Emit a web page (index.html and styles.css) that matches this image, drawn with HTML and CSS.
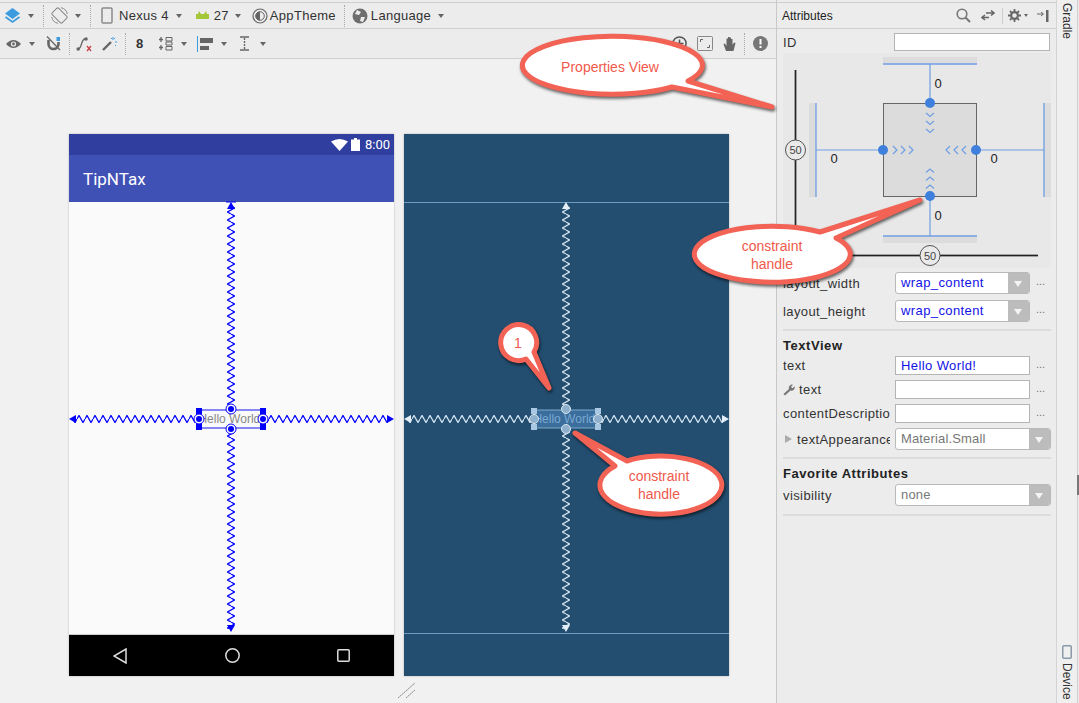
FILE: index.html

```html
<!DOCTYPE html>
<html lang="en">
<head>
    <meta charset="UTF-8">
    <title>Layout Editor</title>
    <link rel="stylesheet" href="styles.css">
</head>
<body>
<div class="app">

    <div class="editor">
        <!-- toolbar atas -->
        <div class="toolbar toolbar-top">
            <svg class="ico i-layers" width="17" height="17" viewBox="0 0 17 17"><path d="M8.500 1 16 6.500 8.500 12 1 6.500Z" fill="#3d9be0"/><path d="M1.500 10 8.500 15 15.500 10" fill="none" stroke="#3d9be0" stroke-width="1.800"/></svg>
            <span class="caret c-layers"></span>
            <span class="sep s-layers"></span>
            <svg class="ico i-rotate" width="17" height="17" viewBox="0 0 17 17"><g fill="none" stroke="#888"><rect x="4" y="1.500" width="9" height="14" rx="1.500" transform="rotate(-45 8.500 8.500)"/><path d="M10 0.700A8 8 0 0 1 16.300 7M7 16.300A8 8 0 0 1 0.700 10"/></g></svg>
            <span class="caret c-rotate"></span>
            <span class="sep s-rotate"></span>
            <svg class="ico i-phone" width="12" height="17" viewBox="0 0 12 17"><rect x="1" y="1" width="10" height="15" rx="1" fill="none" stroke="#8a8a8a" stroke-width="1.500"/></svg>
            <span class="tb-text t-nexus">Nexus 4</span>
            <span class="caret c-nexus"></span>
            <svg class="ico i-android" width="13" height="9" viewBox="0 0 13 9"><path d="M0 3H13V8H0ZM2 3 3 0 5 3ZM8 3 10 0 11 3Z" fill="#a4c639"/></svg>
            <span class="tb-text t-api">27</span>
            <span class="caret c-api"></span>
            <svg class="ico i-theme" width="16" height="16" viewBox="0 0 16 16"><circle cx="8" cy="8" r="7" fill="none" stroke="#666" stroke-width="1.200"/><circle cx="8" cy="8" r="4.300" fill="none" stroke="#666"/><path d="M8 3.700A4.300 4.300 0 0 0 8 12.300Z" fill="#666"/></svg>
            <span class="tb-text t-theme">AppTheme</span>
            <span class="sep s-theme"></span>
            <svg class="ico i-globe" width="16" height="16" viewBox="0 0 16 16"><circle cx="8" cy="8" r="7.500" fill="#6e6e6e"/><path d="M5 2 9 4 7 7 3 6ZM9 9 13 9 11 14 8 13Z" fill="#ececec"/></svg>
            <span class="tb-text t-lang">Language</span>
            <span class="caret c-lang"></span>
        </div>

        <!-- toolbar kedua -->
        <div class="toolbar toolbar-second">
            <svg class="ico i-eye" width="15" height="10" viewBox="0 0 15 10"><path d="M0 5Q7.500 -3 15 5 7.500 13 0 5Z" fill="#666"/><circle cx="7.500" cy="5" r="2.600" fill="#ececec"/><circle cx="7.500" cy="5" r="1.400" fill="#666"/></svg>
            <span class="caret c-eye"></span>
            <svg class="ico i-magnet" width="15" height="15" viewBox="0 0 15 15"><path d="M2.500 4V8A5 5 0 0 0 12.500 8V6" fill="none" stroke="#666" stroke-width="2.600"/><rect x="10.500" y="1" width="3.500" height="4" fill="#3d9be0"/><path d="M1 0.500 14 14" stroke="#666" stroke-width="1.300"/></svg>
            <span class="sep s-magnet"></span>
            <svg class="ico i-path" width="16" height="16" viewBox="0 0 16 16"><path d="M2 13C6 13 5 3 9 3" fill="none" stroke="#666" stroke-width="1.300"/><circle cx="2.200" cy="13" r="1.800" fill="#666"/><circle cx="10" cy="3" r="1.800" fill="#666"/><path d="M11 10 15 15M15 10 11 15" stroke="#c8434a" stroke-width="1.300"/></svg>
            <svg class="ico i-wand" width="15" height="15" viewBox="0 0 15 15"><path d="M1 14 9 6" stroke="#666" stroke-width="2.400"/><path d="M11 1V4M13 6H15M9 2 10 3M13 9 14 10M13 2 12 3" stroke="#3d9be0" stroke-width="1"/></svg>
            <span class="sep s-wand"></span>
            <span class="tb-text t-eight">8</span>
            <svg class="ico i-spacing" width="15" height="15" viewBox="0 0 15 15"><path d="M3 1V6M1 3.500H5M3 9V14M1 11.500H5" stroke="#666" stroke-width="1.300"/><path d="M8 1.500H14V5H8ZM8 6H14V9H8ZM8 10.500H14V14H8Z" fill="none" stroke="#666"/></svg>
            <span class="caret c-spacing"></span>
            <svg class="ico i-align" width="17" height="16" viewBox="0 0 17 16"><rect width="1" height="16" fill="#3d9be0"/><rect x="3" y="2" width="13" height="5" fill="#666"/><rect x="3" y="10" width="9" height="4" fill="#666"/></svg>
            <span class="caret c-align"></span>
            <svg class="ico i-text" width="9" height="15" viewBox="0 0 9 15"><path d="M0 1H9M0 14H9" fill="none" stroke="#666" stroke-width="1.400"/><path d="M4.500 2V13" stroke="#666" stroke-width="1.400" stroke-dasharray="2 1"/></svg>
            <span class="caret c-text"></span>
            <span class="spacer"></span>
            <svg class="ico i-plus" width="15" height="15" viewBox="0 0 15 15"><circle cx="7.500" cy="7.500" r="6.600" fill="none" stroke="#555" stroke-width="1.500"/><path d="M7.500 3.500V11.500M3.500 7.500H11.500" stroke="#555" stroke-width="1.600"/></svg>
            <svg class="ico i-fit" width="16" height="15" viewBox="0 0 16 15"><rect x="0.500" y="0.500" width="15" height="14" rx="1" fill="none" stroke="#888"/><path d="M3.500 6V3.500H6M12.500 9V11.500H10" fill="none" stroke="#666"/></svg>
            <svg class="ico i-hand" width="14" height="16" viewBox="0 0 14 16"><path d="M3 15 0.500 8 2 7.500 3.500 10V2.500H5V7.500 1H6.500V7.500 1.500H8V7.500 3H9.500V9L11 6.500 12.500 7 10.500 15Z" fill="#666"/></svg>
            <span class="sep s-hand"></span>
            <svg class="ico i-warn" width="15" height="15" viewBox="0 0 15 15"><circle cx="7.500" cy="7.500" r="7.500" fill="#777"/><path d="M6.500 3H8.500V8.500H6.500ZM6.500 10H8.500V12H6.500Z" fill="#fff"/></svg>
        </div>

        <!-- area kanvas -->
        <div class="canvas">
            <div class="phone">
                <div class="status-bar">
                    <svg width="17" height="12" viewBox="0 0 17 12"><path d="M0 2.500Q8.500 -2.500 17 2.500L8.500 12Z" fill="#fff"/></svg>
                    <svg class="battery" width="9" height="13" viewBox="0 0 9 13"><path d="M0 1.500H3V0H6V1.500H9V13H0Z" fill="#fff"/></svg>
                    <span class="clock">8:00</span>
                </div>
                <div class="app-bar">TipNTax</div>
                <div class="screen"></div>
                <div class="nav-bar">
                    <svg width="14" height="16" viewBox="0 0 14 16"><path d="M13 1V15L1 8Z" fill="none" stroke="#ddd" stroke-width="1.500"/></svg>
                    <svg width="15" height="15" viewBox="0 0 15 15"><circle cx="7.500" cy="7.500" r="6.700" fill="none" stroke="#ddd" stroke-width="1.500"/></svg>
                    <svg width="13" height="13" viewBox="0 0 13 13"><rect x="0.800" y="0.800" width="11.400" height="11.400" rx="1" fill="none" stroke="#ddd" stroke-width="1.500"/></svg>
                </div>
                <!-- garis constraint -->
                <svg class="blueprint-layer" width="325" height="542" viewBox="0 0 325 542">
                    <defs>
                        <pattern id="zig-v" x="158" y="0" width="8" height="8" patternUnits="userSpaceOnUse"><path d="M4 0 7.500 2 0.500 6 4 8" fill="none" stroke="#00f" stroke-width="1.300"/></pattern>
                        <pattern id="zig-h" x="0" y="281" width="8" height="8" patternUnits="userSpaceOnUse"><path d="M0 4 2 0.500 6 7.500 8 4" fill="none" stroke="#00f" stroke-width="1.300"/></pattern>
                    </defs>
                    <rect x="158" y="72" width="8" height="204" fill="url(#zig-v)"/>
                    <rect x="158" y="295" width="8" height="200" fill="url(#zig-v)"/>
                    <rect x="4" y="281" width="124" height="8" fill="url(#zig-h)"/>
                    <rect x="196" y="281" width="124" height="8" fill="url(#zig-h)"/>
                    <path d="M162 68 166 75H158ZM162 498 158 491H166ZM0 285 7 281V289ZM325 285 318 281V289Z" fill="#00f"/>
                    <path d="M157 68H167" stroke="#00f"/>
                    <rect x="130" y="276" width="64" height="18" fill="none" stroke="#3a3af0" stroke-width="1.200"/>
                    <text class="widget-text" x="162" y="289" text-anchor="middle" fill="#888">Hello World!</text>
                    <path d="M127 274H133V296H127ZM191 274H197V296H191Z" fill="#00f"/>
                    <g fill="#fff" stroke="#00f">
                        <circle cx="130" cy="285" r="5"/><circle cx="194" cy="285" r="5"/><circle cx="162" cy="275" r="5"/><circle cx="162" cy="295" r="5"/>
                    </g>
                    <g fill="#00f">
                        <circle cx="130" cy="285" r="3"/><circle cx="194" cy="285" r="3"/><circle cx="162" cy="275" r="3"/><circle cx="162" cy="295" r="3"/>
                    </g>
                </svg>
            </div>

            <div class="phone phone-blueprint">
                <svg class="blueprint-layer" width="325" height="542" viewBox="0 0 325 542">
                    <defs>
                        <pattern id="zig-v2" x="158" y="0" width="8" height="8" patternUnits="userSpaceOnUse"><path d="M4 0 7.500 2 0.500 6 4 8" fill="none" stroke="#d5e4f0" stroke-width="1.300"/></pattern>
                        <pattern id="zig-h2" x="0" y="281" width="8" height="8" patternUnits="userSpaceOnUse"><path d="M0 4 2 0.500 6 7.500 8 4" fill="none" stroke="#d5e4f0" stroke-width="1.300"/></pattern>
                    </defs>
                    <path d="M0 68.500H325M0 499.500H325" stroke="#6c9cbf"/>
                    <rect x="158" y="72" width="8" height="204" fill="url(#zig-v2)"/>
                    <rect x="158" y="295" width="8" height="200" fill="url(#zig-v2)"/>
                    <rect x="4" y="281" width="124" height="8" fill="url(#zig-h2)"/>
                    <rect x="196" y="281" width="124" height="8" fill="url(#zig-h2)"/>
                    <path d="M162 68 166 75H158ZM162 498 158 491H166ZM0 285 7 281V289ZM325 285 318 281V289Z" fill="#e4eef6"/>
                    <rect x="130" y="276" width="64" height="18" fill="#3b6e9c" stroke="#7fa9cc"/>
                    <text class="widget-text" x="162" y="289" text-anchor="middle" fill="#7aa8d2">Hello World!</text>
                    <path d="M127 274H133V280H127ZM127 290H133V296H127ZM191 274H197V280H191ZM191 290H197V296H191Z" fill="#a9c8e4"/>
                    <g fill="#8fb0cc" stroke="#dbe7f1">
                        <circle cx="130" cy="285" r="4.500"/><circle cx="194" cy="285" r="4.500"/><circle cx="162" cy="275" r="4.500"/><circle cx="162" cy="295" r="4.500"/>
                    </g>
                </svg>
            </div>

            <svg class="resize-mark" width="20" height="17" viewBox="0 0 20 17"><path d="M1 16 18 1M9 16 18 8" stroke="#888" stroke-dasharray="2 0.500"/></svg>
        </div>
    </div>

    <!-- panel atribut -->
    <div class="panel">
        <div class="panel-head">
            <span class="panel-title">Attributes</span>
            <span class="spacer"></span>
            <svg class="ico" width="15" height="15" viewBox="0 0 15 15"><circle cx="6" cy="6" r="4.800" fill="none" stroke="#777" stroke-width="1.600"/><path d="M9.500 9.500 14 14" stroke="#777" stroke-width="2"/></svg>
            <svg class="ico i-swap" width="14" height="11" viewBox="0 0 14 11"><path d="M1 7.500H8M4 5 1 7.500 4 10M5 3H13M10 0.500 13 3 10 5.500" fill="none" stroke="#666" stroke-width="1.500"/></svg>
            <span class="sep s-panel"></span>
            <svg class="ico i-gear" width="13" height="13" viewBox="0 0 13 13"><circle cx="6.500" cy="6.500" r="3.400" fill="none" stroke="#666" stroke-width="2.200"/><path d="M6.500 0V13M0 6.500H13M2 2 11 11M11 2 2 11" stroke="#666" stroke-width="1.800" stroke-dasharray="2.200 8.600 2.200"/></svg>
            <span class="caret caret-small"></span>
            <svg class="ico i-pin" width="12" height="12" viewBox="0 0 12 12"><path d="M0 4H6M4 2 6.500 4 4 6" fill="none" stroke="#666"/><rect x="9" y="0" width="2.500" height="12" fill="#666"/></svg>
        </div>

        <div class="panel-body">
            <div class="row row-id">
                <label class="row-label">ID</label>
                <div class="text-field field-id"></div>
            </div>

            <svg class="inspector" width="268" height="215" viewBox="783 53 268 215">
                <g fill="#dcdcdc">
                    <rect x="883" y="57" width="94" height="7"/>
                    <rect x="883" y="236" width="94" height="7"/>
                    <rect x="809" y="103" width="7" height="94"/>
                    <rect x="1044" y="103" width="7" height="94"/>
                </g>
                <path d="M795.500 70V255M796 255.500H1038" fill="none" stroke="#888" stroke-width="2.500"/>
                <path d="M795.500 70V255M796 255.500H1038" fill="none" stroke="#222" stroke-width="1"/>
                <rect x="883.500" y="103.500" width="93" height="93" fill="#dcdcdc" stroke="#666"/>
                <g fill="none" stroke="#6f9fe3">
                    <path d="M883 64H977M883 236H977M816 103V197M1044 103V197" stroke-width="1.300"/>
                    <path d="M930 64V103M930 197V236M816 150H883M977 150H1044" stroke-width="1.200"/>
                    <g stroke-width="1.200">
                        <path d="M926 113 930 116.500 934 113M926 121 930 124.500 934 121M926 129 930 132.500 934 129"/>
                        <path d="M926 172.500 930 169 934 172.500M926 180.500 930 177 934 180.500M926 188.500 930 185 934 188.500"/>
                        <path d="M893 146 897 150 893 154M901 146 905 150 901 154M909 146 913 150 909 154"/>
                        <path d="M950 146 946 150 950 154M958 146 954 150 958 154M966 146 962 150 966 154"/>
                    </g>
                </g>
                <g fill="#3f80dc">
                    <circle cx="930" cy="103" r="5"/><circle cx="930" cy="196" r="5"/><circle cx="883" cy="150" r="5"/><circle cx="976" cy="150" r="5"/>
                </g>
                <g class="inspector-num" text-anchor="middle" fill="#222">
                    <text x="938" y="88">0</text><text x="834" y="163">0</text><text x="994" y="163">0</text><text x="938" y="220">0</text>
                </g>
                <g fill="#eaeaea" stroke="#555">
                    <circle cx="795.500" cy="150" r="10"/><circle cx="930" cy="255.500" r="10"/>
                </g>
                <g class="inspector-knob" text-anchor="middle" fill="#444">
                    <text x="795.500" y="154">50</text><text x="930" y="259.500">50</text>
                </g>
            </svg>

            <div class="row row-first">
                <label class="row-label">layout_width</label>
                <div class="drop"><span class="drop-value value-blue">wrap_content</span><span class="drop-btn"></span></div>
                <span class="dots">...</span>
            </div>
            <div class="row row-height">
                <label class="row-label">layout_height</label>
                <div class="drop"><span class="drop-value value-blue">wrap_content</span><span class="drop-btn"></span></div>
                <span class="dots">...</span>
            </div>
            <div class="divider divider-tight"></div>

            <h3 class="group-title">TextView</h3>
            <div class="row row-text">
                <label class="row-label">text</label>
                <div class="text-field value-blue">Hello World!</div>
                <span class="dots">...</span>
            </div>
            <div class="row row-text">
                <label class="row-label"><svg class="wrench" width="12" height="12" viewBox="0 0 12 12"><path d="M0.500 10 6 5A3.200 3.200 0 0 1 10 0.800L8 2.800 9.500 4.300 11.500 2.300A3.200 3.200 0 0 1 7.500 6.500L2 11.500Z" fill="#777"/></svg>text</label>
                <div class="text-field"></div>
                <span class="dots">...</span>
            </div>
            <div class="row row-text">
                <label class="row-label">contentDescription</label>
                <div class="text-field"></div>
                <span class="dots">...</span>
            </div>
            <div class="row row-appearance">
                <label class="row-label"><span class="expander"></span>textAppearance</label>
                <div class="drop drop-wide"><span class="drop-value value-gray">Material.Small</span><span class="drop-btn"></span></div>
            </div>
            <div class="divider divider-tight"></div>

            <h3 class="group-title">Favorite Attributes</h3>
            <div class="row row-visibility">
                <label class="row-label">visibility</label>
                <div class="drop drop-wide"><span class="drop-value value-gray">none</span><span class="drop-btn"></span></div>
            </div>
            <div class="divider"></div>
        </div>
    </div>

    <!-- strip kanan -->
    <div class="gutter">
        <span class="gutter-text">Gradle</span>
        <span class="spacer"></span>
        <svg class="gutter-icon" width="10" height="14" viewBox="0 0 10 14"><rect x="0.750" y="0.750" width="8.500" height="12.500" rx="1" fill="none" stroke="#8a9aa8" stroke-width="1.500"/></svg>
        <span class="gutter-text">Device</span>
    </div>

    <!-- anotasi di atas screenshot -->
    <svg class="callouts" width="1079" height="703" viewBox="0 0 1079 703">
        <g class="bubble">
            <path d="M688 81A90 29 0 1 0 672 87L772 107Z"/>
            <path d="M836 238A78 28 0 1 1 820 232L920 200Z"/>
            <path d="M627 461A61 29 0 1 1 615 466L575 433Z"/>
            <path d="M534 352A18 18 0 1 0 526 359L549 388Z"/>
        </g>
        <g class="bubble-text" text-anchor="middle">
            <text x="610" y="72">Properties View</text>
            <text x="772" y="251">constraint</text>
            <text x="772" y="269">handle</text>
            <text x="659" y="481">constraint</text>
            <text x="659" y="499">handle</text>
            <text x="518" y="348">1</text>
        </g>
    </svg>
</div>
</body>
</html>
```

FILE: styles.css

```css
* {
    box-sizing: border-box;
}

body {
    margin: 0;
    font-family: "Liberation Sans", Arial, sans-serif;
    color: #222;
}

.app {
    position: relative;
    display: flex;
    width: 1079px;
    height: 703px;
    overflow: hidden;
    background-color: #ececec;
}

.editor {
    width: 776px;
    display: flex;
    flex-direction: column;
}

.toolbar {
    display: flex;
    align-items: center;
    background-color: #ececec;
    border-bottom: 1px solid #cfcfcf;
}

.toolbar-top {
    height: 27px;
    margin-top: 2px;
    border-top: 1px solid #cfcfcf;
}

.toolbar-second {
    height: 30px;
}

.ico {
    flex: none;
}

.spacer {
    flex: 1;
}

.caret {
    flex: none;
    width: 0;
    height: 0;
    border-left: 3.5px solid transparent;
    border-right: 3.5px solid transparent;
    border-top: 4px solid #666;
}

.sep {
    flex: none;
    height: 22px;
    border-left: 1px dotted #aaa;
}

.tb-text {
    font-size: 13px;
    letter-spacing: 0.3px;
    color: #333;
}

/* jarak item toolbar atas */
.i-layers { margin-left: 4px; }
.c-layers { margin-left: 7px; }
.s-layers { margin-left: 9px; }
.i-rotate { margin-left: 7px; }
.c-rotate { margin-left: 7px; }
.s-rotate { margin-left: 9px; }
.i-phone { margin-left: 10px; }
.t-nexus { margin-left: 6px; }
.c-nexus { margin-left: 7px; }
.i-android { margin-left: 14px; }
.t-api { margin-left: 5px; }
.c-api { margin-left: 6px; }
.i-theme { margin-left: 11px; }
.t-theme { margin-left: 2px; }
.s-theme { margin-left: 8px; }
.i-globe { margin-left: 7px; }
.t-lang { margin-left: 3px; }
.c-lang { margin-left: 7px; }

/* jarak item toolbar kedua */
.i-eye { margin-left: 6px; }
.c-eye { margin-left: 8px; }
.i-magnet { margin-left: 11px; }
.s-magnet { margin-left: 8px; }
.i-path { margin-left: 6px; }
.i-wand { margin-left: 10px; }
.s-wand { margin-left: 8px; }
.t-eight { margin-left: 10px; font-weight: bold; }
.i-spacing { margin-left: 14px; }
.c-spacing { margin-left: 8px; }
.i-align { margin-left: 10px; }
.c-align { margin-left: 7px; }
.i-text { margin-left: 13px; }
.c-text { margin-left: 11px; }
.i-fit { margin-left: 10px; }
.i-hand { margin-left: 10px; }
.s-hand { margin-left: 7px; }
.i-warn { margin-left: 8px; margin-right: 8px; }

.canvas {
    position: relative;
    flex: 1;
    display: flex;
    gap: 10px;
    padding: 75px 0 0 69px;
    background-color: #f1f1f1;
}

.phone {
    position: relative;
    display: flex;
    flex-direction: column;
    width: 325px;
    height: 542px;
    background-color: #fafafa;
    box-shadow: 0 0 2px rgba(0, 0, 0, 0.25);
}

.phone-blueprint {
    background-color: #234e70;
}

.blueprint-layer {
    position: absolute;
    top: 0;
    left: 0;
}

.status-bar {
    display: flex;
    align-items: center;
    justify-content: flex-end;
    height: 21px;
    padding: 0 4px 0 0;
    background-color: #303f9f;
    color: #fff;
}

.battery {
    margin-left: 3px;
}

.clock {
    margin-left: 5px;
    font-family: Roboto, sans-serif;
    font-size: 13px;
}

.app-bar {
    display: flex;
    align-items: center;
    height: 47px;
    padding-left: 14px;
    background-color: #3f51b5;
    color: #fff;
    font-family: Roboto, sans-serif;
    font-size: 17px;
}

.screen {
    height: 433px;
    border-bottom: 1px solid #ccc;
}

.nav-bar {
    display: flex;
    align-items: center;
    height: 41px;
    padding: 0 44px;
    justify-content: space-between;
    background-color: #000;
}

.widget-text {
    font-size: 12px;
    font-family: "Liberation Sans", sans-serif;
}

.resize-mark {
    position: absolute;
    left: 397px;
    top: 623px;
}

.panel {
    width: 280px;
    border-left: 1px solid #c8c8c8;
    background-color: #ececec;
}

.panel-head {
    display: flex;
    align-items: center;
    height: 27px;
    margin-top: 2px;
    padding: 0 7px 0 5px;
    border-top: 1px solid #cfcfcf;
    border-bottom: 1px solid #cfcfcf;
}

.panel-title {
    font-size: 12px;
}

.i-swap { margin-left: 10px; }
.s-panel { margin-left: 7px; height: 16px; border-left: 1px solid #ccc; }
.i-gear { margin-left: 5px; }
.caret-small { margin-left: 3px; border-left-width: 2px; border-right-width: 2px; border-top-width: 3px; }
.i-pin { margin-left: 9px; }

.panel-body {
    padding: 4px 5px 0 6px;
}

.row {
    display: flex;
    align-items: center;
    font-size: 13px;
    letter-spacing: 0.4px;
}

.row-label {
    flex: none;
    display: flex;
    align-items: center;
    width: 107px;
    margin-right: 5px;
    overflow: hidden;
    white-space: nowrap;
    color: #333;
}

.row-id .row-label {
    margin-right: 4px;
}

.text-field {
    width: 135px;
    height: 19px;
    padding-left: 5px;
    background-color: #fff;
    border: 1px solid #b4b4b4;
    line-height: 17px;
}

.field-id {
    width: 156px;
    height: 18px;
}

.value-blue {
    color: #1212e8;
}

.value-gray {
    color: #777;
    letter-spacing: 0.15px;
}

.drop {
    display: flex;
    width: 135px;
    height: 22px;
    overflow: hidden;
    background-color: #fff;
    border: 1px solid #b9b9b9;
    border-radius: 3px;
}

.drop-wide {
    width: 156px;
}

.drop-value {
    flex: 1;
    padding-left: 5px;
    line-height: 20px;
}

.drop-btn {
    position: relative;
    flex: none;
    width: 21px;
    background-color: #bcbcbc;
}

/* segitiga putih pada dropdown */
.drop-btn::after {
    content: "";
    position: absolute;
    left: 6px;
    top: 8px;
    border-left: 4px solid transparent;
    border-right: 4px solid transparent;
    border-top: 6px solid #f4f4f4;
}

.dots {
    margin-left: 6px;
    height: 16px;
    font-size: 11px;
    letter-spacing: 0;
    color: #777;
}

.inspector {
    display: block;
    margin: 2px 0 0 0;
    background-color: #e8e8e8;
}

.inspector-num text {
    font-size: 13px;
}

.inspector-knob text {
    font-size: 11px;
}

.row-first { margin-top: 4px; }
.row-height { margin-top: 6px; }
.row-text { margin-bottom: 5px; }
.row-appearance { margin-top: 5px; }
.row-visibility { margin-top: 3px; }

.divider {
    height: 2px;
    margin-top: 8px;
    background-color: #dcdcdc;
}

.divider-tight {
    margin-top: 7px;
}

.group-title {
    margin: 7px 0 3px;
    font-size: 13px;
    font-weight: bold;
    letter-spacing: 0.55px;
    color: #222;
}

.wrench {
    margin-right: 4px;
}

.expander {
    flex: none;
    margin-right: 5px;
    margin-left: 2px;
    border-top: 4px solid transparent;
    border-bottom: 4px solid transparent;
    border-left: 7px solid #aaa;
}

.gutter {
    position: relative;
    flex: 1;
    display: flex;
    flex-direction: column;
    align-items: center;
    margin-right: 1px;
    padding: 3px 0 3px;
    border-left: 1px solid #d4d4d4;
    border-right: 1px solid #cfcfcf;
    background-color: #efefef;
}

/* thumb scroll kecil di tepi kanan */
.gutter::after {
    content: "";
    position: absolute;
    top: 475px;
    right: -2px;
    width: 2px;
    height: 20px;
    background-color: #777;
}

.gutter-text {
    writing-mode: vertical-rl;
    font-size: 12px;
    color: #333;
}

.gutter-icon {
    margin-bottom: 4px;
}

.callouts {
    position: absolute;
    top: 0;
    left: 0;
    pointer-events: none;
}

.bubble path {
    fill: #fff;
    stroke: #f26355;
    stroke-width: 5;
    stroke-linejoin: round;
    filter: drop-shadow(1.5px 2px 1.5px rgba(0, 0, 0, 0.6));
}

.bubble-text text {
    font-size: 14px;
    fill: #f0594c;
}
```
